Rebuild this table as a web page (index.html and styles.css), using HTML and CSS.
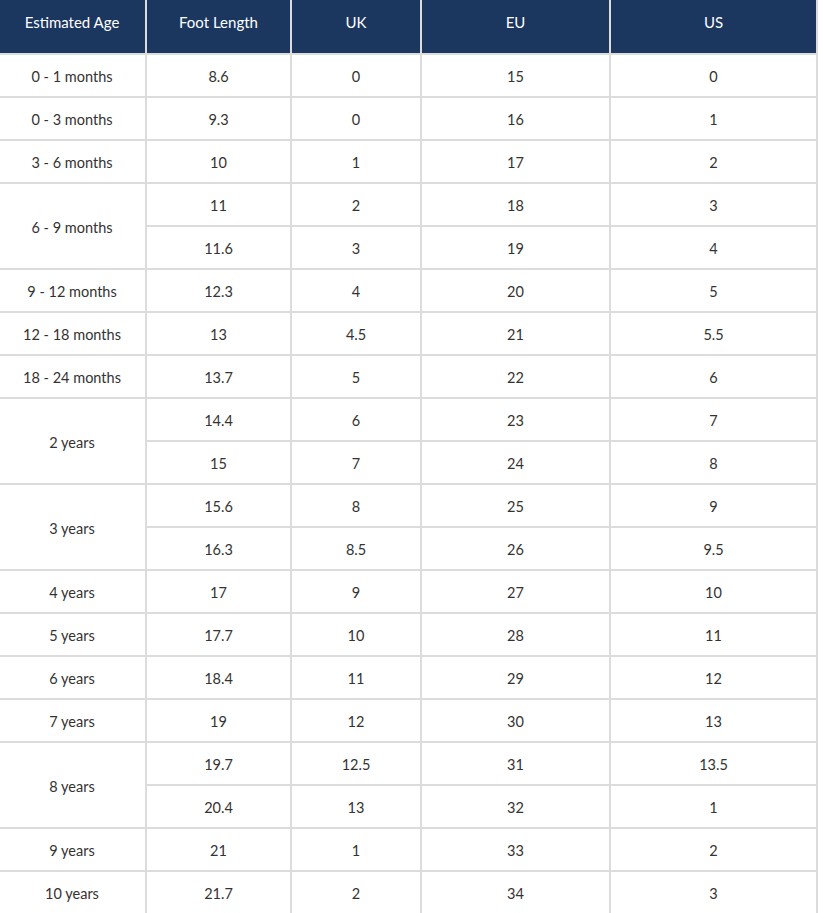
FILE: index.html
```html
<!DOCTYPE html>
<html>
<head>
<meta charset="utf-8">
<link rel="stylesheet" href="styles.css">
</head>
<body>
<table class="size-table">
  <colgroup>
    <col class="c1"><col class="c2"><col class="c3"><col class="c4"><col class="c5">
  </colgroup>
  <thead>
    <tr><th>Estimated Age</th><th>Foot Length</th><th>UK</th><th>EU</th><th>US</th></tr>
  </thead>
  <tbody>
    <tr><td>0 - 1 months</td><td>8.6</td><td>0</td><td>15</td><td>0</td></tr>
    <tr><td>0 - 3 months</td><td>9.3</td><td>0</td><td>16</td><td>1</td></tr>
    <tr><td>3 - 6 months</td><td>10</td><td>1</td><td>17</td><td>2</td></tr>
    <tr><td rowspan="2">6 - 9 months</td><td>11</td><td>2</td><td>18</td><td>3</td></tr>
    <tr><td>11.6</td><td>3</td><td>19</td><td>4</td></tr>
    <tr><td>9 - 12 months</td><td>12.3</td><td>4</td><td>20</td><td>5</td></tr>
    <tr><td>12 - 18 months</td><td>13</td><td>4.5</td><td>21</td><td>5.5</td></tr>
    <tr><td>18 - 24 months</td><td>13.7</td><td>5</td><td>22</td><td>6</td></tr>
    <tr><td rowspan="2">2 years</td><td>14.4</td><td>6</td><td>23</td><td>7</td></tr>
    <tr><td>15</td><td>7</td><td>24</td><td>8</td></tr>
    <tr><td rowspan="2">3 years</td><td>15.6</td><td>8</td><td>25</td><td>9</td></tr>
    <tr><td>16.3</td><td>8.5</td><td>26</td><td>9.5</td></tr>
    <tr><td>4 years</td><td>17</td><td>9</td><td>27</td><td>10</td></tr>
    <tr><td>5 years</td><td>17.7</td><td>10</td><td>28</td><td>11</td></tr>
    <tr><td>6 years</td><td>18.4</td><td>11</td><td>29</td><td>12</td></tr>
    <tr><td>7 years</td><td>19</td><td>12</td><td>30</td><td>13</td></tr>
    <tr><td rowspan="2">8 years</td><td>19.7</td><td>12.5</td><td>31</td><td>13.5</td></tr>
    <tr><td>20.4</td><td>13</td><td>32</td><td>1</td></tr>
    <tr><td>9 years</td><td>21</td><td>1</td><td>33</td><td>2</td></tr>
    <tr><td>10 years</td><td>21.7</td><td>2</td><td>34</td><td>3</td></tr>
  </tbody>
</table>
</body>
</html>
```
FILE: styles.css
```css
html, body {
  margin: 0;
  padding: 0;
  background: #fff;
}
.size-table {
  border-collapse: collapse;
  table-layout: fixed;
  width: 818px;
  font-family: Lato, "Liberation Sans", sans-serif;
  margin-left: -3px;
}
.c1 { width: 148px; }
.c2 { width: 145px; }
.c3 { width: 130px; }
.c4 { width: 189px; }
.c5 { width: 207px; }
.size-table th {
  background: #1b365f;
  color: #fff;
  font-weight: 400;
  font-size: 15px;
  height: 43px;
  padding: 0 0 10px 0;
  text-align: center;
  vertical-align: middle;
  border: 2px solid #dcdcdc;
  border-top: none;
}
.size-table td {
  color: #333;
  font-size: 14.5px;
  height: 39px;
  padding: 2px 0 0 0;
  text-align: center;
  vertical-align: middle;
  border: 2px solid #dcdcdc;
}
```
